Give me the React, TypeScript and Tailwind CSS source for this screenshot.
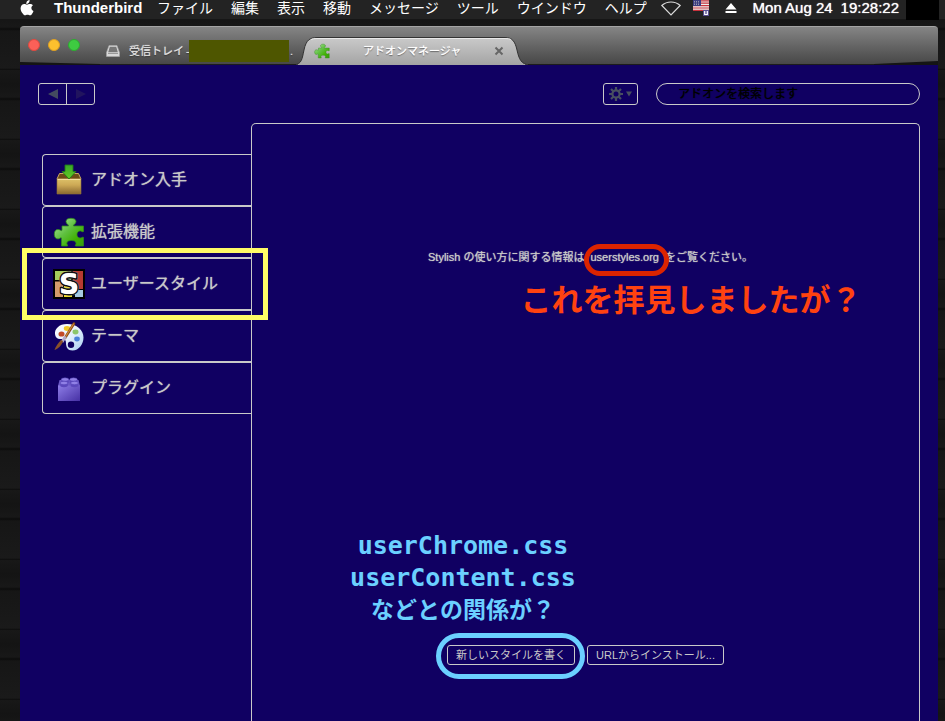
import type { ReactNode } from "react";

const MENUS = ["ファイル", "編集", "表示", "移動", "メッセージ", "ツール", "ウインドウ", "ヘルプ"];

function AppleLogo() {
  return (
    <svg className="h-4 w-3.5" viewBox="0 0 14 16" fill="#fff" aria-hidden="true">
      <path d="M9.6 0c.1 1.300-.4 2.300-1.100 3-.700.700-1.500 1-2.200.9-.1-1.100.4-2.100 1-2.800C8 .5 8.900.1 9.600 0zM13 5.300c-1 .6-1.600 1.500-1.600 2.700 0 1.400.8 2.500 2.100 3-.3 1-.8 1.900-1.400 2.700-.6.900-1.200 1.600-2.100 1.600-.9 0-1.300-.5-2.500-.5s-1.600.5-2.500.5c-.9 0-1.600-.8-2.300-1.800C.9 11.600.2 8.900.8 6.900c.5-1.700 1.900-2.800 3.400-2.800 1.100 0 2 .6 2.800.6.7 0 1.700-.7 3-.7 1.200 0 2.300.5 3 1.300z" />
    </svg>
  );
}

function PuzzleIcon({ className, id }: { className: string; id: string }) {
  return (
    <svg className={className} viewBox="0 0 32 32" aria-hidden="true">
      <defs>
        <linearGradient id={id} x1="0" y1="0" x2="1" y2="1">
          <stop offset="0" stopColor="#b5e8a8" />
          <stop offset=".45" stopColor="#5fc040" />
          <stop offset=".75" stopColor="#3fb000" />
          <stop offset="1" stopColor="#3a9c12" />
        </linearGradient>
      </defs>
      <path
        fill={`url(#${id})`}
        stroke="#2f8a1c"
        strokeWidth=".8"
        d="M9 10h6.500c.5-1.500-2.500-2-2.500-4.500C13 3.300 15.300 2.300 18 2.300s5 1 5 3.200C23 8 20 8.500 20.500 10H30.500v5.500c-1.500.8-2-1-3.800-.5-2.200.6-2.700 2-2.700 3.500s.7 3.200 2.800 3.500c1.800.2 2.200-1.200 3.700-.6V30H22.500c-.5-1.400.8-1.500.6-3-.3-1.700-2.300-2.500-4.600-2.500s-4.500.8-4.700 2.500c-.2 1.500 1.200 1.600.7 3H8.500V22c-1-1-1.200.9-3.500.9-2.600 0-3.700-2-3.700-4.700S2.500 13.500 5 13.500c2.200 0 3 1.800 4 .8z"
      />
    </svg>
  );
}

function GetAddonsIcon() {
  return (
    <svg className="size-8" viewBox="0 0 32 32" aria-hidden="true">
      <defs>
        <linearGradient id="box" x1="0" y1="0" x2="0" y2="1">
          <stop offset="0" stopColor="#dcc068" />
          <stop offset=".4" stopColor="#cda955" />
          <stop offset="1" stopColor="#8a6830" />
        </linearGradient>
        <linearGradient id="arrow" x1="0" y1="0" x2="0" y2="1">
          <stop offset="0" stopColor="#38a828" />
          <stop offset="1" stopColor="#65cc24" />
        </linearGradient>
      </defs>
      <path d="M6.500 9.500h19L28 15H4z" fill="#6d4b17" stroke="#c9a860" />
      <path d="M4 15h24v15H4z" fill="url(#box)" stroke="#96743a" strokeWidth=".6" />
      <path d="M4.500 15.500h23" stroke="#f4dfa0" />
      <path d="M12 1h8v6.500h3L16 15 9 7.500h3z" fill="url(#arrow)" stroke="#20791a" strokeWidth=".9" />
    </svg>
  );
}

function StylishIcon() {
  return (
    <svg className="size-8" viewBox="0 0 32 32" aria-hidden="true">
      <path d="M0 1h32v30H0z" fill="#000" />
      <path d="M2 3h16v9H2z" fill="#a6cc5c" />
      <path d="M20 3h10v18H20z" fill="#b63a32" />
      <path d="M2 13.500h8V29H2z" fill="#d39b6c" />
      <path d="M22 22h8v7h-8z" fill="#a6cae0" />
      <path d="M11 18h8v11h-8z" fill="#f0df28" />
      <text
        x="16"
        y="26"
        textAnchor="middle"
        fontFamily="'DejaVu Sans', sans-serif"
        fontWeight="700"
        fontSize="28"
        fill="#fff"
        stroke="#000"
        strokeWidth="3"
        strokeLinejoin="round"
        paintOrder="stroke"
      >
        S
      </text>
    </svg>
  );
}

function PaletteIcon() {
  return (
    <svg className="size-8" viewBox="0 0 32 32" aria-hidden="true">
      <defs>
        <linearGradient id="pal" x1="0" y1="0" x2="1" y2="1">
          <stop offset="0" stopColor="#fff" />
          <stop offset=".5" stopColor="#e4f0fc" />
          <stop offset="1" stopColor="#a9cdf2" />
        </linearGradient>
      </defs>
      <path
        fill="url(#pal)"
        fillRule="evenodd"
        d="M14 4C6 4 1.500 9 2 14c.3 4 3 5.500 6 5 3.500-.5 5 .5 5 4 0 4 1.500 7.500 6.500 7.500 6.500 0 11-6.500 11-13C30.500 10 24 4 14 4zm4 17.500a3.200 3.200 0 1 1 0 6.400 3.200 3.200 0 0 1 0-6.400z"
      />
      <ellipse cx="8.500" cy="14" rx="3" ry="2.600" fill="#c24a28" />
      <ellipse cx="14" cy="8.500" rx="3.200" ry="2.400" fill="#f0c828" />
      <ellipse cx="22.500" cy="12" rx="3" ry="2.400" fill="#8cc66a" />
      <ellipse cx="24" cy="19" rx="2.800" ry="2.400" fill="#4a80d8" />
      <path d="M21 3.500 12 18" stroke="#8a4c18" strokeWidth="2.600" strokeLinecap="round" />
      <path d="M20.500 4 12 17.500" stroke="#d08a3c" strokeWidth="1.100" strokeLinecap="round" />
      <path d="m12.500 16.500-3.500 5.500" stroke="#b4aac8" strokeWidth="2.800" />
      <path d="M10 21C9 25 5 29 1.500 30 2.500 27 5 23 8 20z" fill="#8a5028" />
    </svg>
  );
}

function BrickIcon() {
  return (
    <svg className="size-8" viewBox="0 0 32 32" aria-hidden="true">
      <defs>
        <linearGradient id="brick" x1="0" y1="0" x2="1" y2="1">
          <stop offset="0" stopColor="#8d7de6" />
          <stop offset="1" stopColor="#4630a4" />
        </linearGradient>
      </defs>
      <path d="M6.500 8h19l1.500 6H5z" fill="#6a58c6" />
      <path d="M5 13.500h22V29H5z" fill="url(#brick)" />
      {[[12, 7.500], [20.500, 7.500], [11, 11], [21.500, 11]].map(([x, y]) => (
        <g key={`${x}-${y}`}>
          <path d={`M${x - 3.8} ${y}v2.500a3.800 1.700 0 0 0 7.600 0V${y}z`} fill="#5b48bc" />
          <ellipse cx={x} cy={y} rx="3.800" ry="1.700" fill="#9080e6" stroke="#4c3ab0" strokeWidth=".5" />
        </g>
      ))}
    </svg>
  );
}

function GearIcon() {
  return (
    <svg className="size-3.5" viewBox="0 0 14 14" aria-hidden="true">
      <g stroke="#485060" strokeWidth="2.200">
        <path d="M7 0v14M0 7h14M2 2l10 10M12 2 2 12" />
      </g>
      <circle cx="7" cy="7" r="4.700" fill="#485060" />
      <circle cx="7" cy="7" r="2.500" fill="#100062" />
    </svg>
  );
}

function MenuBar() {
  return (
    <header className="flex h-[19px] shrink-0 items-center bg-[#232323] pl-5 pr-1.5 text-sm leading-4 text-white">
      <button aria-label="Apple" className="-mt-1"><AppleLogo /></button>
      <nav className="-mt-1 ml-5 flex gap-[18px] whitespace-nowrap [text-shadow:0_0_1px_#ffffff90]">
        <button className="w-[85px] text-left text-[15px] font-bold">Thunderbird</button>
        {MENUS.map((m) => (
          <button key={m}>{m}</button>
        ))}
      </nav>
      <div className="-mt-1 ml-auto flex items-center whitespace-nowrap">
        <svg className="mr-3 h-4 w-5" viewBox="0 0 20 16" fill="none" stroke="#ddd" strokeWidth="1.200" aria-hidden="true">
          <path d="M.8 5.500C6 .8 14 .8 19.200 5.500L10 15z" />
        </svg>
        <svg className="mr-4 h-4 w-4" viewBox="0 0 16 16" aria-hidden="true">
          <path d="M0 0h16v11H0z" fill="#eee" />
          <path d="M0 .8h16M0 3.200h16M0 5.600h16M0 8h16M0 10.400h16" stroke="#c8323c" strokeWidth="1.200" />
          <path d="M0 0h8v6H0z" fill="#3c3c80" />
          <path d="M1 1.500h6M1 3h6M1 4.500h6" stroke="#bbb" strokeWidth=".7" strokeDasharray="1 1" />
          <path d="M10 10h6v6h-6z" fill="#5a5090" />
          <path d="M11.700 11v3.500h2.600V11" fill="none" stroke="#fff" strokeWidth="1.200" />
        </svg>
        <svg className="mr-4 h-3 w-3" viewBox="0 0 12 12" fill="#fff" aria-hidden="true">
          <path d="M6 1l5.500 6.500H.5zM.5 9h11v2H.5z" />
        </svg>
        <time className="flex gap-2 text-[15px] [text-shadow:0_0_1px_#ffffff]">
          <span>Mon Aug 24</span>
          <span>19:28:22</span>
        </time>
      </div>
      <span className="ml-[7px] h-5 w-[33px] shrink-0 bg-black" />
    </header>
  );
}

function TitleBar() {
  return (
    <div className="relative flex h-[39px] shrink-0 items-end rounded-t border-t border-[#a5a5a5] bg-linear-to-b from-[#858585] to-[#464646] text-[11px] text-white">
      <div className="absolute inset-x-0 bottom-0 h-px bg-[#1c1c1c]" />
      <svg className="absolute bottom-0 left-0 h-[3px] w-20" viewBox="0 0 80 3" preserveAspectRatio="none" aria-hidden="true">
        <path d="M0 0 80 2v1H0z" fill="#141414" />
      </svg>
      <svg className="absolute bottom-0 right-0 h-1 w-16" viewBox="0 0 64 4" preserveAspectRatio="none" aria-hidden="true">
        <path d="M0 3 64 0v4H0z" fill="#141414" />
      </svg>
      <div className="mb-3.5 ml-2 flex gap-2">
        <button aria-label="閉じる" className="size-3 rounded-full border border-[#e0483f] bg-[#fb6058]" />
        <button aria-label="しまう" className="size-3 rounded-full border border-[#dfa023] bg-[#fcc02e]" />
        <button aria-label="拡大" className="size-3 rounded-full border border-[#2bac2f] bg-[#3ecb41]" />
      </div>
      <button className="mb-[3px] ml-[26px] flex h-[22px] items-center whitespace-nowrap text-[#dedede] [text-shadow:0_0_1px_#dedede,0_1px_1px_#222]">
        <svg className="mr-[9px] h-3 w-3.5" viewBox="0 0 14 12" aria-hidden="true">
          <path d="M3 .5h8l2.500 7v4H.5v-4z" fill="#d8d8d8" stroke="#aaa" strokeWidth=".6" />
          <path d="M3.800 1.700h6.400l1.600 5.500H2.200z" fill="#777" />
          <path d="M2 8.500h10" stroke="#999" />
        </svg>
        <span>受信トレイ</span>
        <span className="ml-0.5 w-[3px]">-</span>
        <span className="h-[22px] w-[100px] bg-[#4e5600]" />
        <span className="ml-px">.</span>
      </button>
      <div className="relative ml-[3px] h-7 w-[232px]">
        <svg className="absolute inset-0 size-full" viewBox="0 0 232 28" aria-hidden="true">
          <defs>
            <linearGradient id="tab" x1="0" y1="0" x2="0" y2="1">
              <stop offset="0" stopColor="#cacaca" />
              <stop offset="1" stopColor="#a4a4a4" />
            </linearGradient>
          </defs>
          <path
            d="M-2 28C6 27 6 22 8 13 10 3 14 .5 21 .5H209C216 .5 219 4 221 13c2 9 4 14 12 15z"
            fill="url(#tab)"
            stroke="#333"
          />
          <path d="M15 2.500Q17 1.500 21 1.500H209Q213 1.500 215 2.500" fill="none" stroke="#e8e8e8" />
          <path d="M2 27.500H229" stroke="#a4a4a4" />
        </svg>
        <div className="relative flex h-full items-center pl-[18px] pr-6">
          <PuzzleIcon className="size-4" id="puzzle-tab" />
          <button className="flex-1 text-center [text-shadow:0_0_1px_#fff,0_1px_1px_#555]">アドオンマネージャ</button>
          <button aria-label="タブを閉じる">
            <svg className="size-2.5" viewBox="0 0 10 10" stroke="#666" strokeWidth="2" aria-hidden="true">
              <path d="m1.500 1.500 7 7m0-7-7 7" />
            </svg>
          </button>
        </div>
      </div>
    </div>
  );
}

function Toolbar() {
  return (
    <div className="flex items-center pl-[18px] pr-[18px]">
      <div className="flex h-[22px] w-[57px] rounded-[3px] border border-[#c9c9c9]">
        <button aria-label="戻る" className="flex flex-1 items-center justify-center border-r border-[#c9c9c9]">
          <svg className="size-2.5" viewBox="0 0 10 10" fill="#444c60" aria-hidden="true"><path d="M10 0v10L0 5z" /></svg>
        </button>
        <button aria-label="進む" className="flex flex-1 items-center justify-center">
          <svg className="size-2.5" viewBox="0 0 10 10" fill="#21145e" aria-hidden="true"><path d="M0 0v10l10-5z" /></svg>
        </button>
      </div>
      <button aria-label="ツール" className="ml-auto flex h-[22px] w-[35px] items-center justify-center gap-[3px] rounded-[3px] border border-[#c9c9c9]">
        <GearIcon />
        <svg className="h-1.5 w-1.5" viewBox="0 0 6 6" fill="#485060" aria-hidden="true"><path d="M0 .5h6l-3 5z" /></svg>
      </button>
      <input
        type="search"
        aria-label="アドオンを検索"
        placeholder="アドオンを検索します"
        className="ml-[18px] h-[22px] w-[264px] rounded-full border border-[#c9c9c9] bg-transparent pl-[21px] text-xs text-black [text-shadow:0_0_1px_#000] placeholder:text-black placeholder:opacity-100"
      />
    </div>
  );
}

function Category({ icon, label, marked }: { icon: ReactNode; label: string; marked?: boolean }) {
  return (
    <li className="relative">
      <button className="flex h-[52px] w-full items-center gap-1.5 rounded-l border border-r-0 border-[#c9c9c9] pl-2.5 text-left text-base text-[#c9c9c9] [text-shadow:0_0_1px_#c9c9c9]">
        {icon}
        <span>{label}</span>
      </button>
      {marked && <span className="pointer-events-none absolute -bottom-2.5 -left-5 -right-[17px] -top-2.5 z-10 border-[5px] border-[#fffb66]" />}
    </li>
  );
}

export default function App() {
  return (
    <div className="flex h-screen flex-col overflow-hidden bg-[#151515] bg-[repeating-linear-gradient(180deg,#181818_0px,#141414_14px,#181818_27px,#0c0c0c_29px,#161616_31px,#1a1a1a_68px,#0d0d0d_70px)] font-['Liberation_Sans','Noto_Sans_CJK_JP',sans-serif]">
      <MenuBar />
      <div className="ml-5 mr-[7px] mt-[7px] flex min-h-0 flex-1 flex-col">
        <TitleBar />
        <div className="flex min-h-0 flex-1 flex-col bg-[#100062] pt-[18px]">
          <Toolbar />
          <div className="mt-[18px] flex min-h-0 flex-1 pl-[22px] pr-[18px]">
            <ul className="mt-[31px] w-[209px] shrink-0">
              <Category icon={<GetAddonsIcon />} label="アドオン入手" />
              <Category icon={<PuzzleIcon className="size-8" id="puzzle" />} label="拡張機能" />
              <Category icon={<StylishIcon />} label="ユーザースタイル" marked />
              <Category icon={<PaletteIcon />} label="テーマ" />
              <Category icon={<BrickIcon />} label="プラグイン" />
            </ul>
            <main className="flex flex-1 flex-col items-center rounded-t-[5px] border border-b-0 border-[#c9c9c9] pb-14 pt-[125px] text-[11px] text-[#c9c9c9] [text-shadow:0_0_1px_#c9c9c9]">
              <p className="whitespace-nowrap pl-2.5 leading-4">
                Stylish の使い方に関する情報は
                <span className="relative mx-1.5 inline-block">
                  <a href="#userstyles">userstyles.org</a>
                  <span className="pointer-events-none absolute -bottom-[11px] -left-1.5 -right-2.5 -top-[5px] rounded-full border-[5px] border-[#dc2400]" />
                  <strong className="absolute -left-[70px] top-8 text-[31px] font-bold leading-10 text-[#ff4210] [text-shadow:none]">
                    これを拝見しましたが？
                  </strong>
                </span>
                をご覧ください。
              </p>
              <div className="mt-auto flex gap-3">
                <div className="relative">
                  <button className="h-5 w-32 whitespace-nowrap rounded-[3px] border border-[#c9c9c9] leading-4">新しいスタイルを書く</button>
                  <span className="pointer-events-none absolute -bottom-3.5 -left-[11px] -right-2.5 -top-3 rounded-full border-[5px] border-[#6bd0ff]" />
                  <strong className="absolute -left-[99px] bottom-[39px] w-[230px] text-center font-['DejaVu_Sans_Mono','Noto_Sans_CJK_JP',monospace] text-[25px] font-bold leading-8 text-[#6bd0ff] [text-shadow:none]">
                    <span className="block">userChrome.css</span>
                    <span className="block">userContent.css</span>
                    <span className="block text-[23px]">などとの関係が？</span>
                  </strong>
                </div>
                <button className="h-5 w-[137px] whitespace-nowrap rounded-[3px] border border-[#c9c9c9] leading-4">URLからインストール...</button>
              </div>
            </main>
          </div>
        </div>
      </div>
    </div>
  );
}
